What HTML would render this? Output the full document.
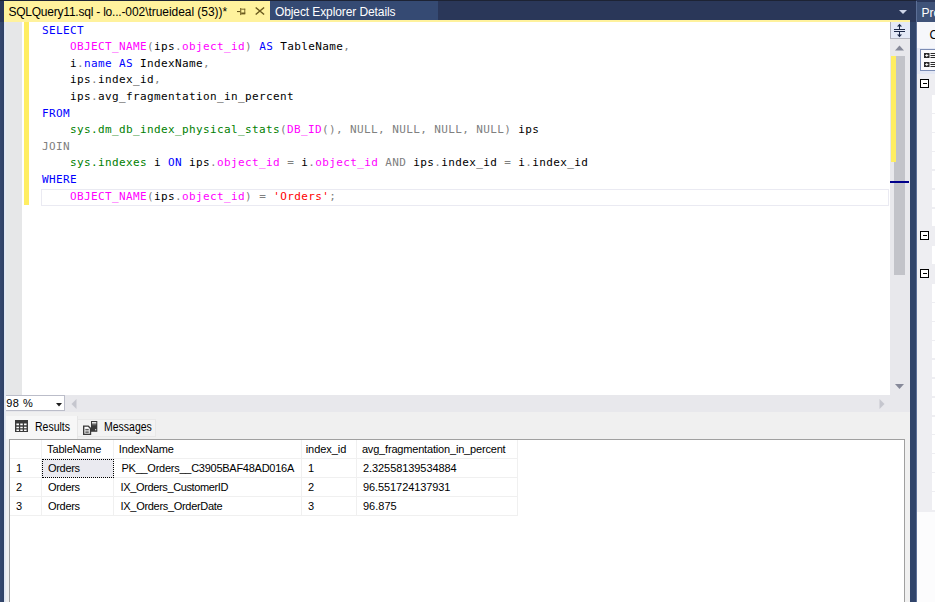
<!DOCTYPE html>
<html><head><meta charset="utf-8"><title>SQLQuery11.sql</title>
<style>
html,body{margin:0;padding:0;}
body{width:935px;height:602px;overflow:hidden;background:#2A3759;position:relative;font-family:"Liberation Sans",sans-serif;}
.abs{position:absolute;}
#tabA{left:4px;top:1px;width:266px;height:21px;background:#FFF29D;}
#tabA .t{left:4.4px;top:3.8px;font-size:12px;color:#000;white-space:nowrap;letter-spacing:-0.05px;}#tabA .t i{font-style:normal;letter-spacing:-0.22px;}
#tabB{left:270px;top:1px;width:168px;height:19px;background:#354A73;}
#tabB .t{left:5px;top:3.8px;letter-spacing:-0.1px;font-size:12px;color:#fff;white-space:nowrap;}
#topln{left:0;top:0;width:916px;height:1px;background:#1D2334;}
#yl{left:4px;top:19.5px;width:906px;height:2.5px;background:#FFF29D;}
#ed{left:4px;top:22px;width:886px;height:373px;background:#fff;}
#mg{left:0;top:0;width:18.4px;height:373px;background:#E6E7E8;}
#yb{left:20.4px;top:0;width:4.6px;height:183px;background:#FFEE62;}
.ln{position:absolute;left:0;white-space:pre;height:16.6px;}
#code{left:38px;top:0.9px;margin:0;font-family:"DejaVu Sans Mono","Liberation Mono",monospace;font-size:11px;letter-spacing:0.378px;line-height:16.67px;color:#000;white-space:pre;}
.k{color:#0000FF}.v{color:#008000}.f{color:#FF00FF}.g{color:#808080}.s{color:#FF0000}
#cl{left:37px;top:166.5px;width:846px;height:15px;border:1px solid #EAEAF2;}
#vs{left:890px;top:22px;width:20px;height:373px;background:#E8E8EC;}
#hs{left:4px;top:395px;width:906px;height:17px;background:#E8E8EC;}
#rp{left:4px;top:412px;width:906px;height:190px;background:#F0F0F0;}
#grid{left:9px;top:439px;width:894px;height:170px;background:#fff;border:1px solid #A0A0A0;}
#pp{left:917px;top:2px;width:18px;height:600px;background:#EEEEF2;}

#split{left:0;top:0;width:20px;height:16.6px;background:#E4E9F7;border-left:1px solid #A9AAB6;border-bottom:1px solid #B4B5C0;box-sizing:border-box;}
#thY{left:1.3px;top:34px;width:4.7px;height:105.8px;z-index:2;background:#FFEE62;}
#th{left:4px;top:34px;width:11px;height:219px;background:#C2C3C9;}
#bl{left:0;top:158.5px;width:19px;height:2px;background:#00008B;}
#zoom{left:0.6px;top:-0.2px;width:60px;height:16.6px;background:#fff;border:1px solid #BBBDC9;box-sizing:border-box;font-size:11px;line-height:13px;}
#zoom span{position:absolute;left:0.6px;top:1.6px;letter-spacing:0.47px;}
.rt{font-size:12px;color:#000;box-sizing:border-box;}
.rt span{position:absolute;white-space:nowrap;transform-origin:0 50%;transform:scaleX(0.875);}
#rt1{left:0;top:4px;height:23px;width:73.5px;background:#F7F7F7;border-right:1px solid #E6E6E6;}#rt1 svg,#rt1 span{margin-top:-4px}
#rt2{left:74px;top:7px;height:18px;width:77.5px;background:#F3F3F3;border:1px solid #E8E8E8;border-left:none;}#rt2 svg,#rt2 span{margin-top:-8px}
#gh,.gr{left:0px;height:18px;font-size:11px;white-space:nowrap;}
.c{position:absolute;top:0;height:100%;box-sizing:border-box;border-right:1px solid #F0F0F0;border-bottom:1px solid #F0F0F0;}
.c span{position:absolute;top:3px;}.c.sel{background:#EAEAF0;outline:1px dotted #000;outline-offset:-1px;}
#ptitle{left:0;top:0;width:18px;height:20px;background:#3F5379;color:#fff;font-size:12px;}
</style></head><body>
<div id="tabA" class="abs"><span class="t abs"><i>SQLQuery11.sql - lo...</i>-002\trueideal (53))*</span><svg class="abs" style="left:232px;top:6px" width="11" height="10" viewBox="0 0 11 10"><g fill="#6B5A1E"><rect x="4.2" y="1" width="1.05" height="7.1"/><rect x="1" y="4" width="3.2" height="1.1"/><rect x="5.2" y="1.7" width="4" height="0.9"/><rect x="8.35" y="1.7" width="0.9" height="5"/><rect x="5.2" y="5.5" width="4.05" height="1.9"/></g></svg><svg class="abs" style="left:251.2px;top:6px" width="9.8" height="8" viewBox="0 0 10 9" preserveAspectRatio="none"><path d="M0.7 0.5L9.3 8.5M9.3 0.5L0.7 8.5" stroke="#6B5A1E" stroke-width="1.4" fill="none"/></svg></div>
<div id="tabB" class="abs"><span class="t abs">Object Explorer Details</span></div>
<div id="yl" class="abs"></div><div id="topln" class="abs"></div>
<div id="ed" class="abs">
<div id="mg" class="abs"></div><div id="yb" class="abs"></div>
<div id="cl" class="abs"></div>
<div id="code" class="abs"><div class="ln" style="top:0px"><span class="k">SELECT</span></div>
<div class="ln" style="top:16px">    <span class="f">OBJECT_NAME</span><span class="g">(</span>ips<span class="g">.</span><span class="f">object_id</span><span class="g">)</span> <span class="k">AS</span> TableName<span class="g">,</span></div>
<div class="ln" style="top:33px">    i<span class="g">.</span><span class="k">name</span> <span class="k">AS</span> IndexName<span class="g">,</span></div>
<div class="ln" style="top:49px">    ips<span class="g">.</span>index_id<span class="g">,</span></div>
<div class="ln" style="top:66px">    ips<span class="g">.</span>avg_fragmentation_in_percent</div>
<div class="ln" style="top:83px"><span class="k">FROM</span></div>
<div class="ln" style="top:99px">    <span class="v">sys.dm_db_index_physical_stats</span><span class="g">(</span><span class="f">DB_ID</span><span class="g">(),</span> <span class="g">NULL,</span> <span class="g">NULL,</span> <span class="g">NULL,</span> <span class="g">NULL)</span> ips</div>
<div class="ln" style="top:116px"><span class="g">JOIN</span></div>
<div class="ln" style="top:132px">    <span class="v">sys.indexes</span> i <span class="k">ON</span> ips<span class="g">.</span><span class="f">object_id</span> <span class="g">=</span> i<span class="g">.</span><span class="f">object_id</span> <span class="g">AND</span> ips<span class="g">.</span>index_id <span class="g">=</span> i<span class="g">.</span>index_id</div>
<div class="ln" style="top:149px"><span class="k">WHERE</span></div>
<div class="ln" style="top:166px">    <span class="f">OBJECT_NAME</span><span class="g">(</span>ips<span class="g">.</span><span class="f">object_id</span><span class="g">)</span> <span class="g">=</span> <span class="s">'Orders'</span><span class="g">;</span></div>
</div>
</div>
<div id="vs" class="abs">
<div id="split" class="abs"><svg class="abs" style="left:-1px;top:0" width="20" height="17" viewBox="0 0 20 17"><g fill="#1B2747"><rect x="4" y="7" width="11" height="1" shape-rendering="crispEdges"/><rect x="4" y="9" width="11" height="1" shape-rendering="crispEdges"/><rect x="9" y="3" width="1" height="4" shape-rendering="crispEdges"/><rect x="9" y="10" width="1" height="4" shape-rendering="crispEdges"/><path d="M9.5 1.8L12 4.6H7Z"/><path d="M9.5 15.2L12 12.4H7Z"/></g></svg></div>
<svg class="abs" style="left:5px;top:22.5px" width="9" height="6"><path d="M0 5.5L4.5 0.5L9 5.5Z" fill="#868999"/></svg>
<div id="thY" class="abs"></div><div id="th" class="abs"></div><div id="bl" class="abs"></div>
<svg class="abs" style="left:5px;top:362px" width="9" height="6"><path d="M0 0L4.5 5L9 0Z" fill="#868999"/></svg>
</div>
<div id="hs" class="abs">
<div id="zoom" class="abs"><span>98 %</span><svg class="abs" style="left:50.8px;top:6.8px" width="6" height="4"><path d="M0 0L3 3.5L6 0Z" fill="#1E1E1E"/></svg></div>
<svg class="abs" style="left:67px;top:3.5px" width="6" height="10"><path d="M5.5 0L0.5 5L5.5 10Z" fill="#C5C6CE"/></svg>
<svg class="abs" style="left:875px;top:3.5px" width="6" height="10"><path d="M0.5 0L5.5 5L0.5 10Z" fill="#C5C6CE"/></svg>
</div>
<div id="rp" class="abs">
<div id="rt1" class="abs rt"><svg class="abs" style="left:11px;top:7.7px" width="13" height="12.4" viewBox="0 0 13 12.4"><rect x="0.7" y="0.7" width="11.6" height="11" fill="#fff" stroke="#3A3A3A" stroke-width="1.4"/><rect x="0.5" y="0.5" width="12" height="3" fill="#3A3A3A"/><path d="M4.6 1V12M8.4 1V12M1 6H12M1 8.9H12" stroke="#3A3A3A" stroke-width="1.3" fill="none"/></svg><span style="left:31.2px;top:7.6px">Results</span></div>
<div id="rt2" class="abs rt"><svg class="abs" style="left:5px;top:8px" width="15" height="16" viewBox="0 0 15 16"><rect x="8" y="1" width="6.3" height="10.8" fill="#3A3A3A"/><rect x="9" y="2" width="4.3" height="1.6" fill="#E6E6E6"/><rect x="9.2" y="4.4" width="4" height="0.8" fill="#8A8A8A"/><rect x="12.1" y="9.2" width="1.1" height="1.1" fill="#fff"/><path d="M0.7 6.1H5.2L7.5 8.4V14.4H0.7Z" fill="#fff" stroke="#3A3A3A" stroke-width="1.4"/><path d="M2.3 9.4H5.8M2.3 11.1H5.8M2.3 12.7H5.8" stroke="#3A3A3A" stroke-width="0.9"/></svg><span style="left:26.2px;top:7.6px">Messages</span></div>
</div>
<div id="grid" class="abs"><div class="abs gr" style="top:0px;height:19px"><div class="c" style="left:0px;width:32px"><span style="left:0px;top:3.1px;letter-spacing:0px"></span></div><div class="c" style="left:32px;width:72px"><span style="left:5.1px;top:3.1px;letter-spacing:-0.16px">TableName</span></div><div class="c" style="left:104px;width:188px"><span style="left:4.8px;top:3.1px;letter-spacing:-0.16px">IndexName</span></div><div class="c" style="left:292px;width:55px"><span style="left:3.7px;top:3.1px;letter-spacing:-0.06px">index_id</span></div><div class="c" style="left:347px;width:161px"><span style="left:4.9px;top:3.1px;letter-spacing:-0.18px">avg_fragmentation_in_percent</span></div></div><div class="abs gr" style="top:19px;height:19px"><div class="c" style="left:0px;width:32px"><span style="left:6px;top:3.1px;letter-spacing:0px">1</span></div><div class="c sel" style="left:32px;width:72px"><span style="left:6.1px;top:3.1px;letter-spacing:-0.35px">Orders</span></div><div class="c" style="left:104px;width:188px"><span style="left:7.5px;top:3.1px;letter-spacing:-0.26px">PK__Orders__C3905BAF48AD016A</span></div><div class="c" style="left:292px;width:55px"><span style="left:6px;top:3.1px;letter-spacing:0px">1</span></div><div class="c" style="left:347px;width:161px"><span style="left:6px;top:3.1px;letter-spacing:-0.075px">2.32558139534884</span></div></div><div class="abs gr" style="top:38px;height:19px"><div class="c" style="left:0px;width:32px"><span style="left:6px;top:3.1px;letter-spacing:0px">2</span></div><div class="c" style="left:32px;width:72px"><span style="left:6.1px;top:3.1px;letter-spacing:-0.35px">Orders</span></div><div class="c" style="left:104px;width:188px"><span style="left:6.6px;top:3.1px;letter-spacing:-0.37px">IX_Orders_CustomerID</span></div><div class="c" style="left:292px;width:55px"><span style="left:6px;top:3.1px;letter-spacing:0px">2</span></div><div class="c" style="left:347px;width:161px"><span style="left:6px;top:3.1px;letter-spacing:-0.09px">96.551724137931</span></div></div><div class="abs gr" style="top:57px;height:19px"><div class="c" style="left:0px;width:32px"><span style="left:6px;top:3.1px;letter-spacing:0px">3</span></div><div class="c" style="left:32px;width:72px"><span style="left:6.1px;top:3.1px;letter-spacing:-0.35px">Orders</span></div><div class="c" style="left:104px;width:188px"><span style="left:6.6px;top:3.1px;letter-spacing:-0.31px">IX_Orders_OrderDate</span></div><div class="c" style="left:292px;width:55px"><span style="left:6px;top:3.1px;letter-spacing:0px">3</span></div><div class="c" style="left:347px;width:161px"><span style="left:6px;top:3.1px;letter-spacing:0px">96.875</span></div></div></div>
<div id="pp" class="abs"><div id="ptitle" class="abs"><span class="abs" style="left:4.5px;top:3.8px">Pro</span></div><div class="abs" style="left:0;top:20px;width:18px;height:26px;background:#F6F7FB"></div><span class="abs" style="left:12.5px;top:26px;font-size:12px;color:#000">C</span><div class="abs" style="left:0;top:46px;width:18px;height:26px;background:#E4E8F4"></div><div class="abs" style="left:2.5px;top:46.5px;width:20px;height:22px;box-sizing:border-box;border:1px solid #7C8DB5;background:#FBFBFD"></div><svg class="abs" style="left:6.5px;top:51px" width="12" height="15" viewBox="0 0 12 15"><rect x="0" y="0" width="5.5" height="5" fill="#2B2B2B"/><rect x="0" y="9" width="5.5" height="5" fill="#2B2B2B"/><path d="M1.2 2.5H4.3M2.75 1V4M1.2 11.5H4.3M2.75 10V13" stroke="#fff" stroke-width="0.9"/><path d="M6.5 0.5H12M6.5 2.5H12M6.5 4.5H12M6.5 9.5H12M6.5 11.5H12M6.5 13.5H12" stroke="#2B2B2B" stroke-width="1"/></svg><div class="abs" style="left:15px;top:93.2px;width:3px;height:17.5px;background:#fff"></div><div class="abs" style="left:15px;top:112.1px;width:3px;height:17.5px;background:#fff"></div><div class="abs" style="left:15px;top:131.0px;width:3px;height:17.5px;background:#fff"></div><div class="abs" style="left:15px;top:149.9px;width:3px;height:17.5px;background:#fff"></div><div class="abs" style="left:15px;top:168.8px;width:3px;height:17.5px;background:#fff"></div><div class="abs" style="left:15px;top:187.7px;width:3px;height:17.5px;background:#fff"></div><div class="abs" style="left:15px;top:206.6px;width:3px;height:17.5px;background:#fff"></div><div class="abs" style="left:15px;top:244.4px;width:3px;height:17.5px;background:#fff"></div><div class="abs" style="left:15px;top:282.2px;width:3px;height:17.5px;background:#fff"></div><div class="abs" style="left:15px;top:301.1px;width:3px;height:17.5px;background:#fff"></div><div class="abs" style="left:15px;top:320.0px;width:3px;height:17.5px;background:#fff"></div><div class="abs" style="left:15px;top:338.9px;width:3px;height:17.5px;background:#fff"></div><div class="abs" style="left:15px;top:357.8px;width:3px;height:17.5px;background:#fff"></div><div class="abs" style="left:15px;top:376.7px;width:3px;height:17.5px;background:#fff"></div><div class="abs" style="left:15px;top:395.6px;width:3px;height:17.5px;background:#fff"></div><div class="abs" style="left:15px;top:414.5px;width:3px;height:17.5px;background:#fff"></div><div class="abs" style="left:15px;top:433.4px;width:3px;height:17.5px;background:#fff"></div><div class="abs" style="left:15px;top:452.3px;width:3px;height:17.5px;background:#fff"></div><div class="abs" style="left:15px;top:471.2px;width:3px;height:17.5px;background:#fff"></div><div class="abs" style="left:15px;top:490.1px;width:3px;height:17.5px;background:#fff"></div><div class="abs" style="left:3px;top:266.9px;width:9px;height:9px;box-sizing:border-box;border:1px solid #000;background:#fff"><div class="abs" style="left:1.5px;top:3px;width:4px;height:1px;background:#000"></div></div><div class="abs" style="left:3px;top:77px;width:9px;height:9px;box-sizing:border-box;border:1px solid #000;background:#fff"><div class="abs" style="left:1.5px;top:3px;width:4px;height:1px;background:#000"></div></div><div class="abs" style="left:3px;top:229.0px;width:9px;height:9px;box-sizing:border-box;border:1px solid #000;background:#fff"><div class="abs" style="left:1.5px;top:3px;width:4px;height:1px;background:#000"></div></div><div class="abs" style="left:0;top:509.5px;width:18px;height:91px;background:#FCFCFD"></div></div>
<svg class="abs" style="left:899px;top:10px" width="8" height="4"><path d="M0 0L4 4L8 0Z" fill="#CED6E8"/></svg>
<div class="abs" style="left:916px;top:1px;width:1px;height:601px;background:#5C6F96"></div>
<div class="abs" style="left:0;top:22px;width:4px;height:580px;background:linear-gradient(90deg,#35486F,#2F4164)"></div>
<div class="abs" style="left:4px;top:22px;width:2px;height:580px;background:linear-gradient(90deg,#DCE5F3,#E8EAF0)"></div>
<div class="abs" style="left:909.6px;top:22px;width:6.9px;height:580px;background:#30446A"></div>
</body></html>
